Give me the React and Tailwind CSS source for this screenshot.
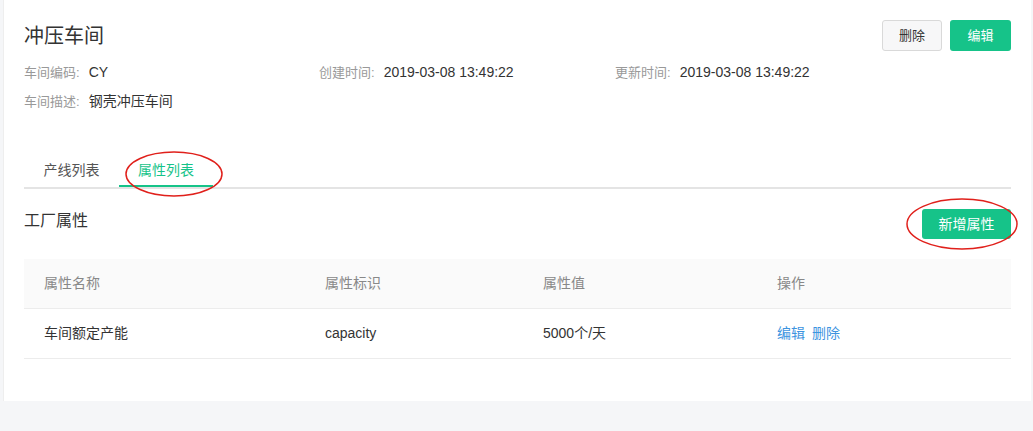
const font = { fontFamily: '"Liberation Sans", "Noto Sans CJK SC", sans-serif' };

function Info({ label, value }) {
  return (
    <div className="flex items-baseline leading-[28px]">
      <span className="text-[13px] text-[#999]">{label}:</span>
      <span className="ml-[9px] text-[14px] text-[#333]">{value}</span>
    </div>
  );
}

const cols = ['w-[281px]', 'w-[218px]', 'w-[234px]', 'flex-1'];

export default function App() {
  return (
    <div className="w-[1033px] h-[431px] bg-[#f5f6f8] pl-[3px] pr-[2px] overflow-hidden" style={font}>
      <div className="relative bg-white border-l border-[#eeeeee] h-[401px] px-[20px]">
        {/* header */}
        <div className="flex items-start justify-between pt-[20px]">
          <h1 className="text-[20px] leading-[32px] text-[#333] font-normal">冲压车间</h1>
          <div className="flex gap-2">
            <button className="w-[60px] h-[31px] rounded-[3px] border border-[#d9d9d9] bg-[#f7f7f8] text-[13px] text-[#333]">删除</button>
            <button className="w-[61px] h-[31px] rounded-[3px] bg-[#16c389] text-[13px] text-white">编辑</button>
          </div>
        </div>
        <div className="mt-[6px]">
          <div className="flex">
            <div className="w-[295px]"><Info label="车间编码" value="CY" /></div>
            <div className="w-[296px]"><Info label="创建时间" value="2019-03-08 13:49:22" /></div>
            <div><Info label="更新时间" value="2019-03-08 13:49:22" /></div>
          </div>
          <Info label="车间描述" value="钢壳冲压车间" />
        </div>

        {/* tabs */}
        <div className="mt-[39px] flex border-b-2 border-[#e4e4e4] w-[987px]">
          <div className="w-[95px] h-[32px] text-center text-[14px] leading-[30px] text-[#555]">产线列表</div>
          <div className="w-[94px] h-[32px] text-center text-[14px] leading-[30px] text-[#16c389] border-b-2 border-[#16c389] -mb-[2px]">属性列表</div>
        </div>

        {/* section */}
        <div className="flex justify-between items-start w-[987px] mt-[19px]">
          <div className="text-[16px] text-[#333] leading-[26px]">工厂属性</div>
          <button className="mt-[1px] w-[89px] h-[30px] rounded-[3px] bg-[#16c389] text-[14px] text-white">新增属性</button>
        </div>

        {/* table */}
        <div className="w-[987px] mt-[20px] text-[14px]">
          <div className="flex h-[50px] items-center bg-[#fafafa] border-b border-[#ececec] text-[#888]">
            {['属性名称', '属性标识', '属性值', '操作'].map((h, i) => (
              <div key={h} className={`${cols[i]} pl-[20px]`}>{h}</div>
            ))}
          </div>
          <div className="flex h-[50px] items-center border-b border-[#ececec] text-[#333]">
            <div className={`${cols[0]} pl-[20px]`}>车间额定产能</div>
            <div className={`${cols[1]} pl-[20px]`}>capacity</div>
            <div className={`${cols[2]} pl-[20px]`}>5000个/天</div>
            <div className={`${cols[3]} pl-[20px] flex gap-[7px] text-[#3d94df]`}>
              <span>编辑</span>
              <span>删除</span>
            </div>
          </div>
        </div>

        {/* annotation ellipses */}
        <svg className="absolute left-0 top-0 pointer-events-none" width="1028" height="401">
          <ellipse cx="170" cy="174" rx="48" ry="22" fill="none" stroke="#e0201b" strokeWidth="1.5" />
          <ellipse cx="958" cy="224" rx="55" ry="25" fill="none" stroke="#e0201b" strokeWidth="1.5" />
        </svg>
      </div>
    </div>
  );
}
